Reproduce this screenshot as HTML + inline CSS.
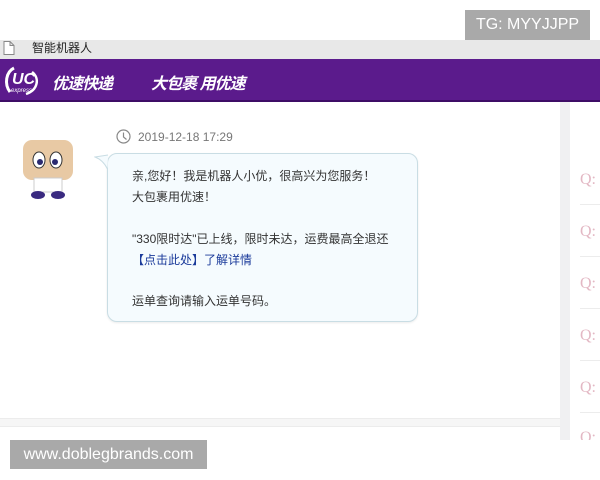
<!DOCTYPE html>
<html><head><meta charset="utf-8"><style>
*{margin:0;padding:0;box-sizing:border-box}
body{width:600px;height:480px;overflow:hidden;background:#fff;font-family:"Liberation Sans","Noto Sans CJK SC",sans-serif;position:relative}
.a{position:absolute}
.q{position:absolute;left:580px;font-family:"Liberation Serif",serif;font-size:16px;color:#e3b8c4}
.l{position:absolute;left:580px;width:20px;height:1px;background:#ececec}
.t{position:absolute;left:132px;font-size:12px;color:#333;white-space:nowrap}
</style></head><body>
<div class="a" style="left:0;top:40px;width:600px;height:19px;background:#e8e8e8"></div>
<svg class="a" style="left:3px;top:41px" width="12" height="14"><path d="M1 .5H7L11 4.5V13.5H1Z M7 .5V4.5H11" fill="#fff" stroke="#888"/></svg>
<div class="a" style="left:32px;top:40px;font-size:12px;color:#222;line-height:16px">智能机器人</div>
<div class="a" style="left:0;top:59px;width:600px;height:43px;background:#5b1b8c"></div>
<div class="a" style="left:0;top:100px;width:600px;height:2px;background:#3e0d66"></div>
<svg class="a" style="left:2px;top:64px" width="48" height="34"><path d="M12 4C4 8 2 20 8 28" stroke="#fff" stroke-width="3" fill="none"/><text x="10" y="20" font-size="16" font-weight="bold" font-style="italic" fill="#fff" font-family="Liberation Sans">UC</text><path d="M30 8C38 14 36 26 24 30" stroke="#fff" stroke-width="2.5" fill="none"/><text x="9" y="28" font-size="6" fill="#fff" font-style="italic" font-family="Liberation Sans">express</text></svg>
<div class="a" style="left:52px;top:70px;font-size:16px;font-weight:bold;font-style:italic;color:#fff;letter-spacing:-1px">优速快递</div>
<div class="a" style="left:151px;top:70px;font-size:16px;font-weight:bold;font-style:italic;color:#fff;letter-spacing:-1px">大包裹 用优速</div>
<div class="a" style="left:560px;top:102px;width:10px;height:338px;background:#f0f0f2"></div>
<div class="q" style="top:171px">Q:</div><div class="l" style="top:204px"></div>
<div class="q" style="top:223px">Q:</div><div class="l" style="top:256px"></div>
<div class="q" style="top:275px">Q:</div><div class="l" style="top:308px"></div>
<div class="q" style="top:327px">Q:</div><div class="l" style="top:360px"></div>
<div class="q" style="top:379px">Q:</div><div class="l" style="top:412px"></div>
<div class="q" style="top:429px;height:11px;overflow:hidden">Q:</div>
<div class="a" style="left:0;top:418px;width:560px;height:9px;background:#f6f6f6;border-top:1px solid #ececec;border-bottom:1px solid #ececec"></div>
<svg class="a" style="left:20px;top:138px" width="56" height="64"><rect x="3" y="2" width="50" height="40" rx="9" fill="#e8c9a4"/><ellipse cx="19" cy="22" rx="6" ry="8" fill="#fff" stroke="#333"/><ellipse cx="36" cy="22" rx="6" ry="8" fill="#fff" stroke="#333"/><circle cx="20" cy="24" r="3" fill="#2a2a70"/><circle cx="35" cy="24" r="3" fill="#2a2a70"/><rect x="14" y="40" width="28" height="14" fill="#fff" stroke="#ccc"/><ellipse cx="18" cy="57" rx="7" ry="4" fill="#3a2a80"/><ellipse cx="38" cy="57" rx="7" ry="4" fill="#3a2a80"/></svg>
<svg class="a" style="left:116px;top:129px" width="15" height="15"><circle cx="7.5" cy="7.5" r="6.5" fill="none" stroke="#888" stroke-width="1.2"/><path d="M7.5 3.5V8L10.5 10.5" fill="none" stroke="#888" stroke-width="1.2"/></svg>
<div class="a" style="left:138px;top:130px;font-size:12px;color:#777">2019-12-18 17:29</div>
<div class="a" style="left:107px;top:153px;width:311px;height:169px;background:#f5fbfe;border:1px solid #c9dde4;border-radius:10px;box-shadow:0 1px 2px rgba(0,0,0,.08)"></div>
<svg class="a" style="left:94px;top:154px" width="16" height="16"><path d="M14 1 L1 3 Q9 6 13.5 15" fill="#f5fbfe" stroke="#c9dde4"/></svg>
<div class="t" style="top:167px">亲,您好！我是机器人小优，很高兴为您服务！</div>
<div class="t" style="top:188px">大包裹用优速！</div>
<div class="t" style="top:230px">"330限时达"已上线，限时未达，运费最高全退还</div>
<div class="t" style="top:251px;color:#1a3a9a">【点击此处】了解详情</div>
<div class="t" style="top:292px">运单查询请输入运单号码。</div>
<div class="a" style="left:465px;top:10px;width:125px;height:30px;background:#a9a9a9;color:#fff;font-size:16px;line-height:30px;text-align:center">TG: MYYJJPP</div>
<div class="a" style="left:10px;top:440px;width:197px;height:29px;background:#a9a9a9;color:#fff;font-size:16px;line-height:29px;text-align:center">www.doblegbrands.com</div>
</body></html>
